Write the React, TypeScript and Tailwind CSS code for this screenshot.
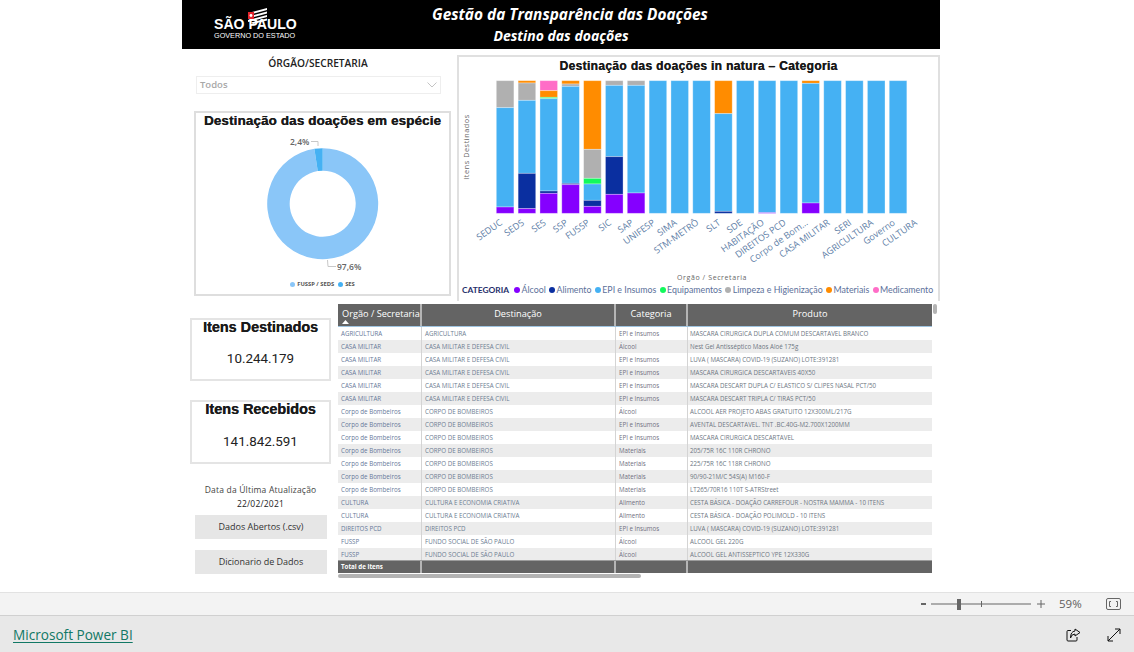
import React from "react";

const C = { p: "#8500ff", n: "#0a2fa0", b: "#45b1f3", g: "#b0b0b0", o: "#ff8c00", e: "#12f95c", k: "#ff6dc7" };
type Seg = [keyof typeof C, number, number];
const bars: Seg[][] = [
  [["g", 92, 173], ["b", 173, 471], ["p", 471, 490]],
  [["o", 92, 99], ["g", 99, 151], ["b", 151, 370], ["n", 370, 476], ["p", 476, 490]],
  [["k", 92, 122], ["o", 122, 142], ["e", 142, 146], ["b", 146, 423], ["n", 423, 430], ["p", 430, 490]],
  [["o", 92, 102], ["g", 102, 109], ["b", 109, 400], ["n", 400, 404], ["p", 404, 490]],
  [["o", 92, 298], ["g", 298, 385], ["e", 385, 402], ["b", 402, 451], ["n", 451, 469], ["p", 469, 490]],
  [["g", 92, 106], ["b", 106, 320], ["n", 320, 433], ["p", 433, 490]],
  [["g", 92, 106], ["b", 106, 429], ["p", 429, 490]],
  [["b", 92, 490]],
  [["b", 92, 490]],
  [["b", 92, 490]],
  [["o", 92, 191], ["b", 191, 484], ["n", 484, 490]],
  [["b", 92, 490]],
  [["b", 92, 488], ["p", 488, 490]],
  [["b", 92, 490]],
  [["o", 92, 100], ["b", 100, 459], ["p", 459, 490]],
  [["b", 92, 490]],
  [["b", 92, 490]],
  [["b", 92, 490]],
  [["b", 92, 490]],
];
const labels = ["SEDUC", "SEDS", "SES", "SSP", "FUSSP", "SIC", "SAP", "UNIFESP", "SIMA", "STM-METRÔ", "SLT", "SDE", "HABITAÇÃO", "DIREITOS PCD", "Corpo de Bom...", "CASA MILITAR", "SERI", "AGRICULTURA", "Governo", "CULTURA"];

const legend: [string, string][] = [
  ["Álcool", C.p], ["Alimento", C.n], ["EPI e Insumos", C.b], ["Equipamentos", C.e],
  ["Limpeza e Higienização", C.g], ["Materiais", C.o], ["Medicamento", C.k],
];

const CB = "CASA MILITAR", CD = "CASA MILITAR E DEFESA CIVIL", BO = "Corpo de Bombeiros", BD = "CORPO DE BOMBEIROS";
const rows = [
  ["AGRICULTURA", "AGRICULTURA", "EPI e Insumos", "MASCARA CIRURGICA DUPLA COMUM DESCARTAVEL BRANCO"],
  [CB, CD, "Álcool", "Nest Gel Antisséptico Maos Aloé 175g"],
  [CB, CD, "EPI e Insumos", "LUVA ( MASCARA) COVID-19 (SUZANO) LOTE:391281"],
  [CB, CD, "EPI e Insumos", "MASCARA CIRURGICA DESCARTAVEIS 40X50"],
  [CB, CD, "EPI e Insumos", "MASCARA DESCART DUPLA C/ ELASTICO S/ CLIPES NASAL PCT/50"],
  [CB, CD, "EPI e Insumos", "MASCARA DESCART TRIPLA C/ TIRAS PCT/50"],
  [BO, BD, "Álcool", "ALCOOL AER PROJETO ABAS GRATUITO 12X300ML/217G"],
  [BO, BD, "EPI e Insumos", "AVENTAL DESCARTAVEL. TNT .BC.40G-M2.700X1200MM"],
  [BO, BD, "EPI e Insumos", "MASCARA CIRURGICA DESCARTAVEL"],
  [BO, BD, "Materiais", "205/75R 16C 110R CHRONO"],
  [BO, BD, "Materiais", "225/75R 16C 118R CHRONO"],
  [BO, BD, "Materiais", "90/90-21M/C 54S(A) M160-F"],
  [BO, BD, "Materiais", "LT265/70R16 110T S-ATRStreet"],
  ["CULTURA", "CULTURA E ECONOMIA CRIATIVA", "Alimento", "CESTA BÁSICA - DOAÇÃO CARREFOUR - NOSTRA MAMMA - 10 ITENS"],
  ["CULTURA", "CULTURA E ECONOMIA CRIATIVA", "Alimento", "CESTA BÁSICA - DOAÇÃO POLIMOLD - 10 ITENS"],
  ["DIREITOS PCD", "DIREITOS PCD", "EPI e Insumos", "LUVA ( MASCARA) COVID-19 (SUZANO) LOTE:391281"],
  ["FUSSP", "FUNDO SOCIAL DE SÃO PAULO", "Álcool", "ALCOOL GEL 220G"],
  ["FUSSP", "FUNDO SOCIAL DE SÃO PAULO", "Álcool", "ALCOOL GEL ANTISSEPTICO YPE 12X330G"],
];

function Logo() {
  return (
    <div className="relative w-[84px] h-[30px] text-white font-['Liberation_Sans',sans-serif]">
      <svg className="absolute left-[34px] top-0" width="20" height="18" viewBox="0 0 20 18">
        <g fill="#fff">
          <path d="M0 5 L19 0 V2 L0 7Z" /><path d="M0 8.5 L19 3.5 V5.5 L0 10.5Z" /><path d="M0 12 L19 7 V9 L0 14Z" /><path d="M3 14.5 L19 10.5 V12.5 L5 16Z" />
        </g>
        <rect x="0" y="4" width="6" height="7" fill="#e4242b" />
        <circle cx="3" cy="7.5" r="1.4" fill="#fff" />
      </svg>
      <div className="absolute left-0 top-[9px] text-[14.1px] leading-[14px] font-bold whitespace-nowrap">SÃO PAULO</div>
      <div className="absolute left-0 top-[25px] text-[7.25px] leading-[6px] whitespace-nowrap">GOVERNO DO ESTADO</div>
    </div>
  );
}

function Donut() {
  const cx = 322.7, cy = 203.7, R = 55.5, r = 33;
  const a = (-8.64 * Math.PI) / 180;
  const x1 = cx + R * Math.sin(a), y1 = cy - R * Math.cos(a), x2 = cx + r * Math.sin(a), y2 = cy - r * Math.cos(a);
  const main = `M${cx} ${cy - R} A${R} ${R} 0 1 1 ${x1} ${y1} L${x2} ${y2} A${r} ${r} 0 1 0 ${cx} ${cy - r}Z`;
  const small = `M${x1} ${y1} A${R} ${R} 0 0 1 ${cx} ${cy - R} L${cx} ${cy - r} A${r} ${r} 0 0 0 ${x2} ${y2}Z`;
  return (
    <svg className="block w-[253px] h-[144px]" viewBox="196 129 253 144">
      <path d={main} fill="#8ac6f8" />
      <path d={small} fill="#45b1f3" />
      <path d="M311 141.5 H318 V146" fill="none" stroke="#c8c8c8" />
      <path d="M327.5 260 L328 266.5 H336" fill="none" stroke="#c8c8c8" />
      <text x="290" y="145" fontSize="8.5" fill="#666" fontFamily="'Open Sans',sans-serif" fontWeight="600">2,4%</text>
      <text x="337" y="269.5" fontSize="8.5" fill="#666" fontFamily="'Open Sans',sans-serif" fontWeight="600">97,6%</text>
    </svg>
  );
}

function Chart() {
  const bx = (i: number) => 496.3 + i * 21.83;
  const sy = (v: number) => 50 + v / 3;
  return (
    <svg className="block w-[479px] h-[209px]" viewBox="459 74 479 209">
      <text transform="translate(469,147) rotate(-90)" textAnchor="middle" fontSize="7.2" letterSpacing="0.6" fill="#666" fontFamily="'Open Sans',sans-serif">Itens Destinados</text>
      {bars.map((segs, i) => (
        <g key={i}>
          {segs.map(([c, a, b], j) => (
            <rect key={j} x={bx(i)} y={sy(a)} width={17.6} height={sy(b) - sy(a)} fill={C[c]} stroke="#fff" strokeOpacity={0.4} strokeWidth={0.8} />
          ))}
        </g>
      ))}
      {labels.map((l, i) => (
        <text key={l} transform={`translate(${bx(i) + 2},${217.5}) rotate(-35)`} textAnchor="end" dominantBaseline="hanging" fontSize="9.1" fill="#5f7fa8" fontFamily="'Open Sans',sans-serif">{l}</text>
      ))}
      <text x="712" y="280" textAnchor="middle" fontSize="7" letterSpacing="0.6" fill="#666" fontFamily="'Open Sans',sans-serif">Orgão / Secretaria</text>
    </svg>
  );
}

function Table() {
  const cols = "grid grid-cols-[84px_194px_72px_244px]";
  return (
    <div className="relative w-[602px] h-[273px] font-['Open_Sans',sans-serif]">
      <div className={`${cols} w-[594px] h-[23px] bg-[#646464] text-white text-[9.2px] border-b border-[#9fc4e0]`}>
        <div className="relative border-r-2 border-[#b5b5b5] pl-[4px] pt-[2px] leading-[15px] whitespace-nowrap">
          Orgão / Secretaria
          <svg className="absolute left-[4px] bottom-[2px]" width="7" height="4" viewBox="0 0 7 4"><path d="M0 4 L3.5 0 L7 4Z" fill="#fff" /></svg>
        </div>
        <div className="border-r-2 border-[#b5b5b5] text-center pt-[2px] leading-[15px]">Destinação</div>
        <div className="border-r-2 border-[#b5b5b5] text-center pt-[2px] leading-[15px]">Categoria</div>
        <div className="text-center pt-[2px] leading-[15px]">Produto</div>
      </div>
      <div className="w-[594px] h-[233px] overflow-hidden">
        {rows.map((r, i) => (
          <div key={i} className={`${cols} h-[13px] text-[6.2px] leading-[13px] whitespace-nowrap ${i % 2 ? "bg-[#ececec]" : "bg-white"}`}>
            <div className="border-r border-[#d4d4d4] pl-[3px] text-[#66789a]">{r[0]}</div>
            <div className="border-r border-[#d4d4d4] pl-[3px] text-[#6c7d92]">{r[1]}</div>
            <div className="border-r border-[#d4d4d4] pl-[3px] text-[#706f80]">{r[2]}</div>
            <div className="pl-[2px] text-[#6c7682]">{r[3]}</div>
          </div>
        ))}
      </div>
      <div className={`${cols} w-[594px] h-[13px] bg-[#646464] border-t border-[#9c9c9c] text-white text-[6.2px] font-bold leading-[12px]`}>
        <div className="border-r-2 border-[#b5b5b5] pl-[3px]">Total de itens</div>
        <div className="border-r-2 border-[#b5b5b5]" />
        <div className="border-r-2 border-[#b5b5b5]" />
        <div />
      </div>
      <div className="mt-[1px] w-[303px] h-[4px] rounded-[2px] bg-[#b3b3b3]" />
      <div className="absolute left-[595px] top-0 w-[4px] h-[10px] rounded-[2px] bg-[#b3b3b3]" />
    </div>
  );
}

function Kpi({ title, value, h, mt, pt }: { title: string; value: string; h: string; mt: string; pt: string }) {
  return (
    <div className={`${h} ${mt} w-[141px] border-2 border-[#e4e4e4] flex flex-col items-center`}>
      <div className="-mt-[1px] text-[14.4px] leading-[16px] font-bold text-[#1a1a1a] font-['Liberation_Sans',sans-serif] [text-shadow:0.3px_0_0_#1a1a1a]">{title}</div>
      <div className={`${pt} text-[13.4px] leading-[18px] text-[#222] font-['Roboto',sans-serif]`}>{value}</div>
    </div>
  );
}

export default function App() {
  return (
    <div className="w-[1134px] h-[652px] overflow-hidden bg-white flex flex-col font-['Open_Sans',sans-serif]">
      <div className="h-[592px] pl-[182px]">
        <div className="w-[758px]">
          <header className="h-[49px] bg-black flex items-center relative">
            <div className="absolute left-[32px] top-[8px]"><Logo /></div>
            <div className="flex-1 flex flex-col items-center pl-[18px] text-white italic font-bold font-['Open_Sans',sans-serif]">
              <div className="text-[15.4px] leading-[22px]">Gestão da Transparência das Doações</div>
              <div className="text-[14px] leading-[18px] pt-[1px] mr-[18px]">Destino das doações</div>
            </div>
          </header>
          <div className="flex h-[253px] pt-[6px]">
            <div className="ml-[12px] w-[257px]">
              <div className="text-center text-[10.2px] leading-[14px] font-semibold text-[#222] pt-[1px] pb-[6px] pr-[9px]">ÓRGÃO/SECRETARIA</div>
              <div className="ml-[2px] w-[245px] h-[18px] border border-[#eeeeee] flex items-center justify-between pl-[3px] pr-[3px] text-[9.5px] font-semibold text-[#a8a8a8]">
                <span>Todos</span>
                <svg width="10" height="6" viewBox="0 0 10 6"><path d="M0.5 0.5 L5 5 L9.5 0.5" fill="none" stroke="#c4c4c4" /></svg>
              </div>
              <div className="mt-[17px] h-[185px] border-2 border-[#dedede]">
                <div className="text-center text-[13.4px] leading-[16px] font-bold text-[#1a1a1a] font-['Liberation_Sans',sans-serif] tracking-[0.15px] [text-shadow:0.3px_0_0_#1a1a1a]">Destinação das doações em espécie</div>
                <Donut />
                <div className="flex justify-center items-center gap-[2px] text-[5.8px] font-bold text-[#555] pt-[7px]">
                  <span className="w-[5px] h-[5px] rounded-full bg-[#8ac6f8]" />
                  <span>FUSSP / SEDS</span>
                  <span className="ml-[2px] w-[5px] h-[5px] rounded-full bg-[#45b1f3]" />
                  <span>SES</span>
                </div>
              </div>
            </div>
            <div className="ml-[6px] w-[483px] h-[246px] border-2 border-b-0 border-[#e0e0e0]">
              <div className="pt-[1px] text-center text-[12px] leading-[16px] font-bold text-[#1a1a1a] font-['Liberation_Sans',sans-serif] tracking-[0.35px] [text-shadow:0.3px_0_0_#1a1a1a]">Destinação das doações in natura – Categoria</div>
              <Chart />
              <div className="flex items-center pl-[3px] text-[8.8px] leading-[14px] whitespace-nowrap text-[#5b6f9a] font-['Lato',sans-serif]">
                <span className="font-bold text-[8.4px] text-[#1f2f6b] mr-[5px]">CATEGORIA</span>
                {legend.map(([t, c]) => (
                  <span key={t} className="flex items-center mr-[3.3px]">
                    <span className="w-[6px] h-[6px] rounded-full mr-[1.5px]" style={{ background: c }} />
                    {t}
                  </span>
                ))}
              </div>
            </div>
          </div>
          <div className="flex pt-[2px]">
            <div className="ml-[8px] w-[141px] flex flex-col">
              <Kpi title="Itens Destinados" value="10.244.179" h="h-[63px]" mt="mt-[14px]" pt="pt-[15px]" />
              <Kpi title="Itens Recebidos" value="141.842.591" h="h-[64px]" mt="mt-[19px]" pt="pt-[16px]" />
              <div className="mt-[19px] text-center text-[8.5px] leading-[14px] text-[#444] tracking-[0.2px]">
                <div>Data da Última Atualização</div>
                <div className="text-[#222]">22/02/2021</div>
              </div>
              <button className="ml-[5px] mt-[4px] w-[132px] h-[24px] bg-[#e6e6e6] text-[9px] text-[#333]">Dados Abertos (.csv)</button>
              <button className="ml-[5px] mt-[11px] w-[132px] h-[24px] bg-[#e6e6e6] text-[9px] text-[#333]">Dicionario de Dados</button>
            </div>
            <div className="ml-[7px]"><Table /></div>
          </div>
        </div>
      </div>
      <div className="h-[24px] border-y border-[#d0d0d0] border-t-[#e2e2e2] bg-[#f3f3f3] flex items-center justify-end text-[#605e5c]">
        <svg className="mr-[2px]" width="124" height="14" viewBox="0 0 124 14">
          <rect x="0" y="6" width="5" height="2" fill="#666" />
          <rect x="10" y="6.5" width="100" height="1" fill="#666" />
          <rect x="36" y="2" width="4" height="11" fill="#666" />
          <rect x="60" y="4" width="1" height="6" fill="#666" />
          <path d="M116 7 H124 M120 3 V11" stroke="#666" strokeWidth="1" />
        </svg>
        <span className="ml-[12px] text-[11.5px] leading-none w-[24px]">59%</span>
        <svg className="ml-[23px] mr-[13px]" width="15" height="12" viewBox="0 0 15 12" fill="none" stroke="#666">
          <rect x="0.5" y="0.5" width="14" height="11" rx="1.5" />
          <path d="M5 3.5 H3.5 V8.5 H5 M10 3.5 H11.5 V8.5 H10" />
        </svg>
      </div>
      <footer className="flex-1 bg-[#e8e8e8] flex items-center pl-[13px] pt-[2px]">
        <a className="text-[13.6px] text-[#117865] underline underline-offset-2 font-['Open_Sans',sans-serif]">Microsoft Power BI</a>
        <div className="ml-auto flex items-center mr-[13px] gap-[26px] text-black">
          <svg width="15" height="14" viewBox="0 0 15 14" fill="none" stroke="#111" strokeWidth="1">
            <path d="M5 2.5 H2 Q1 2.5 1 3.5 V12 Q1 13 2 13 H10 Q11 13 11 12 V9" />
            <path d="M9 1 L14 4.5 L9 8 V6 Q5.5 6 4.5 10 Q4.5 3.5 9 3Z" />
          </svg>
          <svg width="14" height="14" viewBox="0 0 14 14" fill="none" stroke="#111" strokeWidth="1">
            <path d="M1 13 L13 1 M8 1 H13 V6 M1 8 V13 H6" />
          </svg>
        </div>
      </footer>
    </div>
  );
}
